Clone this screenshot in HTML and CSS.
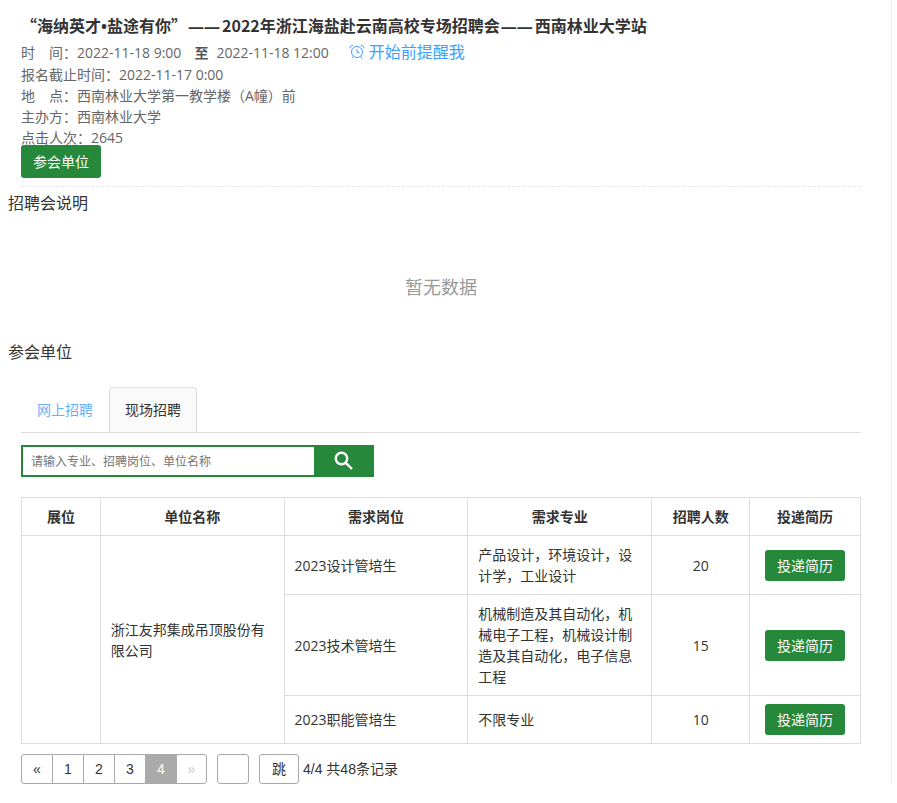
FILE: index.html
```html
<!DOCTYPE html>
<html lang="zh-CN">
<head>
<meta charset="utf-8">
<title>招聘会</title>
<link rel="stylesheet" href="styles.css">
</head>
<body>
<main class="page">
  <header class="fair">
    <h1 class="fair-title">“海纳英才<span class="dot">•</span>盐途有你”<span class="dash">——</span>2022年浙江海盐赴云南高校专场招聘会<span class="dash">——</span>西南林业大学站</h1>
    <div class="time-row">
      <span>时　间：2022-11-18 9:00</span>
      <b class="to">至</b>
      <span>2022-11-18 12:00</span>
      <a class="remind" href="#">
        <svg class="clock" viewBox="0 0 16 16" aria-hidden="true"><circle cx="8" cy="8" r="5.5"/><path d="M8 4.8V8.4H10.6M1.2 4.4C.8 2.6 2.2 1.2 4.2 1.4M14.8 4.4C15.2 2.6 13.8 1.2 11.8 1.4M4.2 12.4L3 14.4M11.8 12.4L13 14.4"/></svg>
        <span>开始前提醒我</span>
      </a>
    </div>
    <p>报名截止时间：2022-11-17 0:00</p>
    <p>地　点：西南林业大学第一教学楼（A幢）前</p>
    <p>主办方：西南林业大学</p>
    <p>点击人次：2645</p>
    <button class="btn btn-tall" type="button">参会单位</button>
  </header>

  <h2 class="section-title">招聘会说明</h2>
  <p class="empty">暂无数据</p>

  <h2 class="section-title">参会单位</h2>
  <section class="units">
    <nav class="tabs">
      <a class="tab" href="#">网上招聘</a>
      <a class="tab active" href="#">现场招聘</a>
    </nav>
    <form class="search">
      <input type="text" aria-label="搜索" placeholder="请输入专业、招聘岗位、单位名称">
      <button type="button" aria-label="搜索">
        <svg viewBox="0 0 20 20" aria-hidden="true"><circle cx="7.5" cy="7.5" r="5.7"/><path d="M11.8 11.8L18 18"/></svg>
      </button>
    </form>
    <table class="jobs">
      <colgroup><col class="c-booth"><col class="c-wide"><col class="c-wide"><col class="c-wide"><col class="c-count"><col></colgroup>
      <thead>
        <tr><th>展位</th><th>单位名称</th><th>需求岗位</th><th>需求专业</th><th>招聘人数</th><th>投递简历</th></tr>
      </thead>
      <tbody>
        <tr>
          <td rowspan="3"></td>
          <td rowspan="3">浙江友邦集成吊顶股份有限公司</td>
          <td>2023设计管培生</td><td>产品设计，环境设计，设计学，工业设计</td><td class="mid">20</td>
          <td><button class="btn" type="button">投递简历</button></td>
        </tr>
        <tr>
          <td>2023技术管培生</td><td>机械制造及其自动化，机械电子工程，机械设计制造及其自动化，电子信息工程</td><td class="mid">15</td>
          <td><button class="btn" type="button">投递简历</button></td>
        </tr>
        <tr>
          <td>2023职能管培生</td><td>不限专业</td><td class="mid">10</td>
          <td><button class="btn" type="button">投递简历</button></td>
        </tr>
      </tbody>
    </table>
    <div class="pager">
      <div class="pages">
        <a href="#">«</a><a href="#">1</a><a href="#">2</a><a href="#">3</a><a class="current" href="#">4</a><a class="off" href="#">»</a>
      </div>
      <input class="goto" type="text" aria-label="页码">
      <button class="jump" type="button">跳</button>
      <span class="total">4/4 共48条记录</span>
    </div>
  </section>
</main>
</body>
</html>
```
FILE: styles.css
```css
* { box-sizing: border-box; }

body {
  margin: 0;
  background: #fff;
  color: #333;
  font: 14px/21px "Open Sans", "Noto Sans CJK SC", sans-serif;
}

h1, h2, p { margin: 0; }
a { text-decoration: none; color: inherit; }
button, input { font: inherit; }
button { cursor: pointer; }

.page {
  margin-right: 5px;
  padding: 9px 30px 0 8px;
  border-right: 1px solid #eee;
}

.fair {
  margin-left: 13px;
  padding-bottom: 8px;
  border-bottom: 1px dashed #e8e8e8;
  color: #666;
}

.fair-title {
  color: #333;
  font: bold 16px/32px "Noto Sans CJK SC", sans-serif;
}

.dot, .dash { font-family: "Open Sans", sans-serif; line-height: 1; }
.dash { margin: 0 2px 0 1px; }

.time-row {
  display: flex;
  align-items: center;
  height: 23px;
  padding-bottom: 1px;
}

.to { margin: 0 8px 0 13px; color: #555; }

.remind {
  display: flex;
  align-items: center;
  gap: 4px;
  margin-left: 20px;
  color: #409eff;
  font-size: 16px;
}

.clock {
  width: 16px;
  height: 16px;
  fill: none;
  stroke: #409eff;
  stroke-width: 1;
}

.btn {
  display: block;
  width: 80px;
  height: 31px;
  margin: 0 auto;
  padding: 0;
  border: 0;
  border-radius: 3px;
  background: #26883b;
  color: #fff;
}

.btn-tall {
  position: relative;
  height: 33px;
  margin: -3px 0 0;
}

.section-title {
  font-size: 16px;
  font-weight: 400;
  line-height: 32px;
}

.empty {
  margin-left: 13px;
  padding: 54px 0 35px;
  color: #999;
  font-size: 18px;
  line-height: 28px;
  text-align: center;
}

.units { margin-left: 13px; }

.tabs {
  display: flex;
  margin-top: 19px;
  border-bottom: 1px solid #ddd;
}

.tab {
  padding: 11px 15px 12px;
  border: 1px solid transparent;
  border-bottom: 0;
  border-radius: 4px 4px 0 0;
  color: #66b1ff;
}

.tab.active {
  border-color: #ddd;
  background: #fafafa;
  color: #333;
}

.search {
  display: flex;
  width: 353px;
  height: 32px;
  margin: 12px 0 20px;
}

.search input {
  flex: 1;
  min-width: 0;
  padding: 0 8px;
  border: 2px solid #26883b;
  border-right: 0;
  font-size: 12px;
  outline: 0;
}

.search input::placeholder { color: #757575; }

.search button {
  display: flex;
  align-items: center;
  justify-content: center;
  width: 60px;
  padding: 0;
  border: 0;
  background: #26883b;
}

.search svg {
  width: 20px;
  height: 20px;
  fill: none;
  stroke: #fff;
  stroke-width: 2.4;
}

.jobs {
  width: 100%;
  table-layout: fixed;
  border-collapse: collapse;
}

.c-booth { width: 9.4%; }
.c-wide { width: 21.9%; }
.c-count { width: 11.7%; }

.jobs th, .jobs td {
  padding: 8px 10px;
  border: 1px solid #ddd;
}

.jobs td { text-align: left; }
.jobs .mid { text-align: center; }

.pager {
  display: flex;
  margin-top: 10px;
  font-family: "Liberation Sans", "Noto Sans CJK SC", sans-serif;
  line-height: 28px;
}

.pages {
  display: flex;
  border: 1px solid #aaa;
  border-radius: 3px;
}

.pages a {
  width: 31px;
  border-right: 1px solid #aaa;
  text-align: center;
}

.pages a:last-child { width: 29px; border-right: 0; }
.pages .current { background: #aaa; color: #fff; }
.pages .off { color: #ccc; }

.goto, .jump {
  height: 30px;
  margin-left: 10px;
  padding: 0;
  border: 1px solid #aaa;
  border-radius: 3px;
  background: #fff;
  color: #333;
}

.goto { width: 32px; }
.jump { width: 40px; }
.total { margin-left: 4px; line-height: 30px; }
```
